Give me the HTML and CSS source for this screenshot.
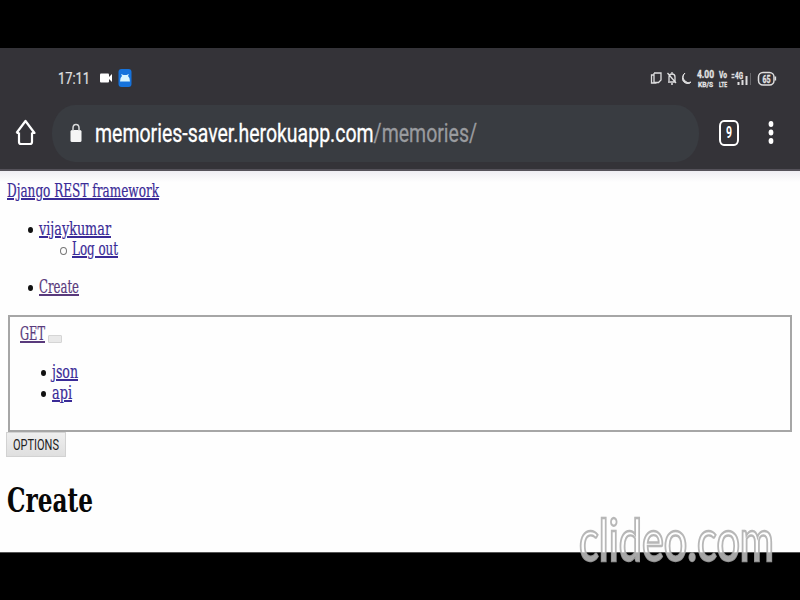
FILE: index.html
```html
<!DOCTYPE html>
<html lang="en">
<head>
<meta charset="utf-8">
<title>Create – Django REST framework</title>
<link rel="stylesheet" href="styles.css">
</head>
<body>
<div class="screen">
  <header class="chrome">
    <div class="status">
      <span class="clock fit" data-width="32">17:11</span>
      <svg class="camera" width="13" height="10" viewBox="0 0 13 10"><rect x="0" y="0.5" width="9" height="9" rx="1"/><path d="M8 5l4-4v8z"/></svg>
      <svg class="app" width="14" height="18" viewBox="0 0 14 18"><rect x=".5" width="13" height="18" rx="3" fill="#1673dc"/><path d="M2 12.500q0-4 2-5.500L3 5l2.500 1h3L11 5l-1 2q2 1.500 2 5.500z" fill="#d8f5ff"/></svg>
      <svg class="indicators" width="130" height="20" viewBox="650 68 130 20" fill="none" stroke="#dededf" stroke-width="1.3">
        <path d="M654 75h-2.500v8h5M654 73h7v7l-2.500 2.500H654V73"/>
        <path d="M668 82h8M669 81v-4q0-3 3-3t3 3v4M672 72v2M671 84h2M667.500 73l8.500 10"/>
        <path d="M685 73q-4 4 0 8 3 3 6 1-1 2-4 1.500-5-1-4.500-6 .5-3.500 2.500-4.500z" fill="#dededf" stroke-width="1"/>
        <g class="tiny" fill="#e4e4e5" stroke="#e4e4e5" stroke-width=".3">
          <text x="697" y="78" font-size="10" textLength="17" lengthAdjust="spacingAndGlyphs">4.00</text>
          <text x="698" y="86.500" font-size="8" textLength="15" lengthAdjust="spacingAndGlyphs">KB/S</text>
          <text x="719" y="78" font-size="9" textLength="8" lengthAdjust="spacingAndGlyphs">Vo</text>
          <text x="719" y="86.500" font-size="8" textLength="8" lengthAdjust="spacingAndGlyphs">LTE</text>
          <text x="735" y="78.500" font-size="9" textLength="8" lengthAdjust="spacingAndGlyphs">4G</text>
          <text x="762.500" y="82.500" font-size="10" textLength="8" lengthAdjust="spacingAndGlyphs">65</text>
        </g>
        <path d="M731.500 74.500h3M731.500 77.500h3" stroke-width="1.500"/>
        <path d="M738.500 82v3M742.500 80v5M746.500 76v9" stroke-width="2"/>
        <path d="M750.500 73v12" stroke="#66666a" stroke-width="1"/>
        <rect x="758.500" y="72.500" width="15.500" height="12.500" rx="4.500" stroke-width="1.500"/><path d="M775.500 76.500v4"/>
      </svg>
    </div>
    <div class="toolbar">
      <svg class="home" width="22" height="28" viewBox="0 0 22 28"><path d="M4 13.500v9.500q0 2 2 2h9q2 0 2-2v-9.500M1.500 14 10.500 2l9 12H17M1.500 14H4"/></svg>
      <div class="address">
        <svg class="lock" width="12" height="20" viewBox="0 0 12 20"><rect x=".5" y="7" width="11" height="12" rx="1.500" fill="#f5f5f5"/><path d="M3 8V5q0-3.500 3-3.500T9 5v3" fill="none" stroke="#d8d9da" stroke-width="1.500"/></svg>
        <span class="url fit" data-width="382">memories-saver.herokuapp.com<span class="path">/memories/</span></span>
      </div>
      <span class="tabs"><span class="fit" data-width="6">9</span></span>
      <svg class="more" width="6" height="26" viewBox="0 0 6 26"><ellipse cx="3" cy="4" rx="2.400" ry="3"/><ellipse cx="3" cy="12.500" rx="2.400" ry="3"/><ellipse cx="3" cy="21" rx="2.400" ry="3"/></svg>
    </div>
  </header>
  <main class="page">
    <a class="brand"><span class="fit" data-width="152">Django REST framework</span></a>
    <ul class="menu">
      <li><a><span class="fit" data-width="72">vijaykumar</span></a>
        <ul><li><a><span class="fit" data-width="46">Log out</span></a></li></ul>
      </li>
    </ul>
    <ul class="crumbs"><li><a class="visited"><span class="fit" data-width="40">Create</span></a></li></ul>
    <fieldset class="formats">
      <div class="get"><a class="visited"><span class="fit" data-width="25">GET</span></a><span class="toggle"></span></div>
      <ul>
        <li><a><span class="fit" data-width="26">json</span></a></li>
        <li><a><span class="fit" data-width="20">api</span></a></li>
      </ul>
    </fieldset>
    <button class="options"><span class="fit" data-width="46">OPTIONS</span></button>
    <h1><span class="fit" data-width="86">Create</span></h1>
  </main>
</div>
<svg class="watermark" width="208" height="84" viewBox="0 0 208 84"><text x="3" y="57" textLength="195" lengthAdjust="spacingAndGlyphs">clideo.com</text></svg>
<script src="fit.js"></script>
</body>
</html>
```

FILE: styles.css
```css
* { box-sizing: border-box; }
body { margin: 0; width: 800px; height: 600px; overflow: hidden; background: #000; padding-top: 48px; }
.screen { height: 505px; background: #fefefe; overflow: hidden; border-bottom: 1px solid #555; }
.fit { display: inline-block; transform-origin: 0 50%; white-space: nowrap; text-decoration: inherit; }

.chrome { height: 123px; background: #343338; border-bottom: 2px solid #55525a; font-family: Roboto, sans-serif; color: #fff; }
.status { height: 56px; padding: 4px 20px 0 58px; display: flex; align-items: center; }
.clock { font-size: 17px; line-height: 20px; color: #e2e2e3; -webkit-text-stroke: .2px; }
.camera { margin-left: 10px; fill: #fff; }
.app { margin-left: 5px; }
.indicators { margin-left: auto; }
.tiny { font-family: Roboto, sans-serif; font-weight: 700; }
.toolbar { display: flex; align-items: center; height: 58px; padding-left: 15px; }
.home { fill: none; stroke: #fff; stroke-width: 2.2; stroke-linejoin: round; }
.address { width: 647px; height: 57px; margin-left: 15px; padding-left: 18px; border-radius: 23px / 28px; background: #393c41; display: flex; align-items: center; }
.lock { flex: none; }
.url { margin-left: 13px; font-size: 26px; line-height: 32px; -webkit-text-stroke: .3px; }
.path { color: #999b9f; }
.tabs { width: 20px; height: 26px; margin-left: 20px; border: 2.5px solid #fff; border-radius: 5px / 6px; display: flex; align-items: center; justify-content: center; font-size: 16px; font-weight: 700; line-height: 20px; }
.more { margin-left: 29px; fill: #fff; }

.page { padding: 10px 8px 0 7px; font: 18px/20px "DejaVu Serif Condensed", "DejaVu Serif", serif; color: #111; background: linear-gradient(#eeedf3, #fefefe 11px); }
a { color: #3a2b97; text-decoration: underline; text-decoration-thickness: 1.5px; text-underline-offset: 1px; -webkit-text-stroke: .2px; }
.visited { color: #593a7c; }
.brand { display: block; height: 20px; }
ul { margin: 0; padding: 0 0 0 32px; list-style: none; }
li { position: relative; min-height: 20px; }
li::before { content: ""; position: absolute; left: -11px; top: 8px; width: 5px; height: 6px; border-radius: 50%; background: #111; }
li li::before { left: -12px; background: none; border: 1px solid #777; }
.menu { margin-top: 18px; }
.menu ul { padding-left: 33px; }
.crumbs { margin-top: 18px; }
.formats { margin: 18px 0 0 1px; height: 117px; border: 2px solid #a6a6a6; padding: 7px 10px 0; min-width: 0; }
.get { display: flex; align-items: center; height: 20px; }
.toggle { width: 14px; height: 8px; margin: 10px 0 0 3px; border: 1px solid #d5d5d5; border-radius: 1px; background: #e9e9e9; }
.formats ul { margin-top: 18px; }
.formats li { height: 21px; }
.options { display: block; width: 60px; height: 25px; margin: 0 0 0 -1px; padding: 0 0 0 6px; border: 1px solid #d2d2d2; background: linear-gradient(#efefef, #dfdfdf); font: 15px/20px Roboto, sans-serif; color: #222; text-align: left; }
h1 { margin: 24px 0 0; font-size: 33px; line-height: 40px; color: #080808; }

.watermark { position: absolute; left: 576px; top: 504px; }
.watermark text { font: 500 57px Lato, sans-serif; fill: #fff; fill-opacity: .65; stroke: #aaa; stroke-opacity: .85; stroke-width: 2.4; }
```

FILE: fit.js
```js
// Condense each label horizontally to its intended width.
document.querySelectorAll(".fit").forEach((el) => {
  const natural = el.getBoundingClientRect().width;
  const width = Number(el.dataset.width);
  el.style.transform = `scaleX(${width / natural})`;
  el.style.marginRight = `${width - natural}px`;
  el.style.flexShrink = "0";
});
```
